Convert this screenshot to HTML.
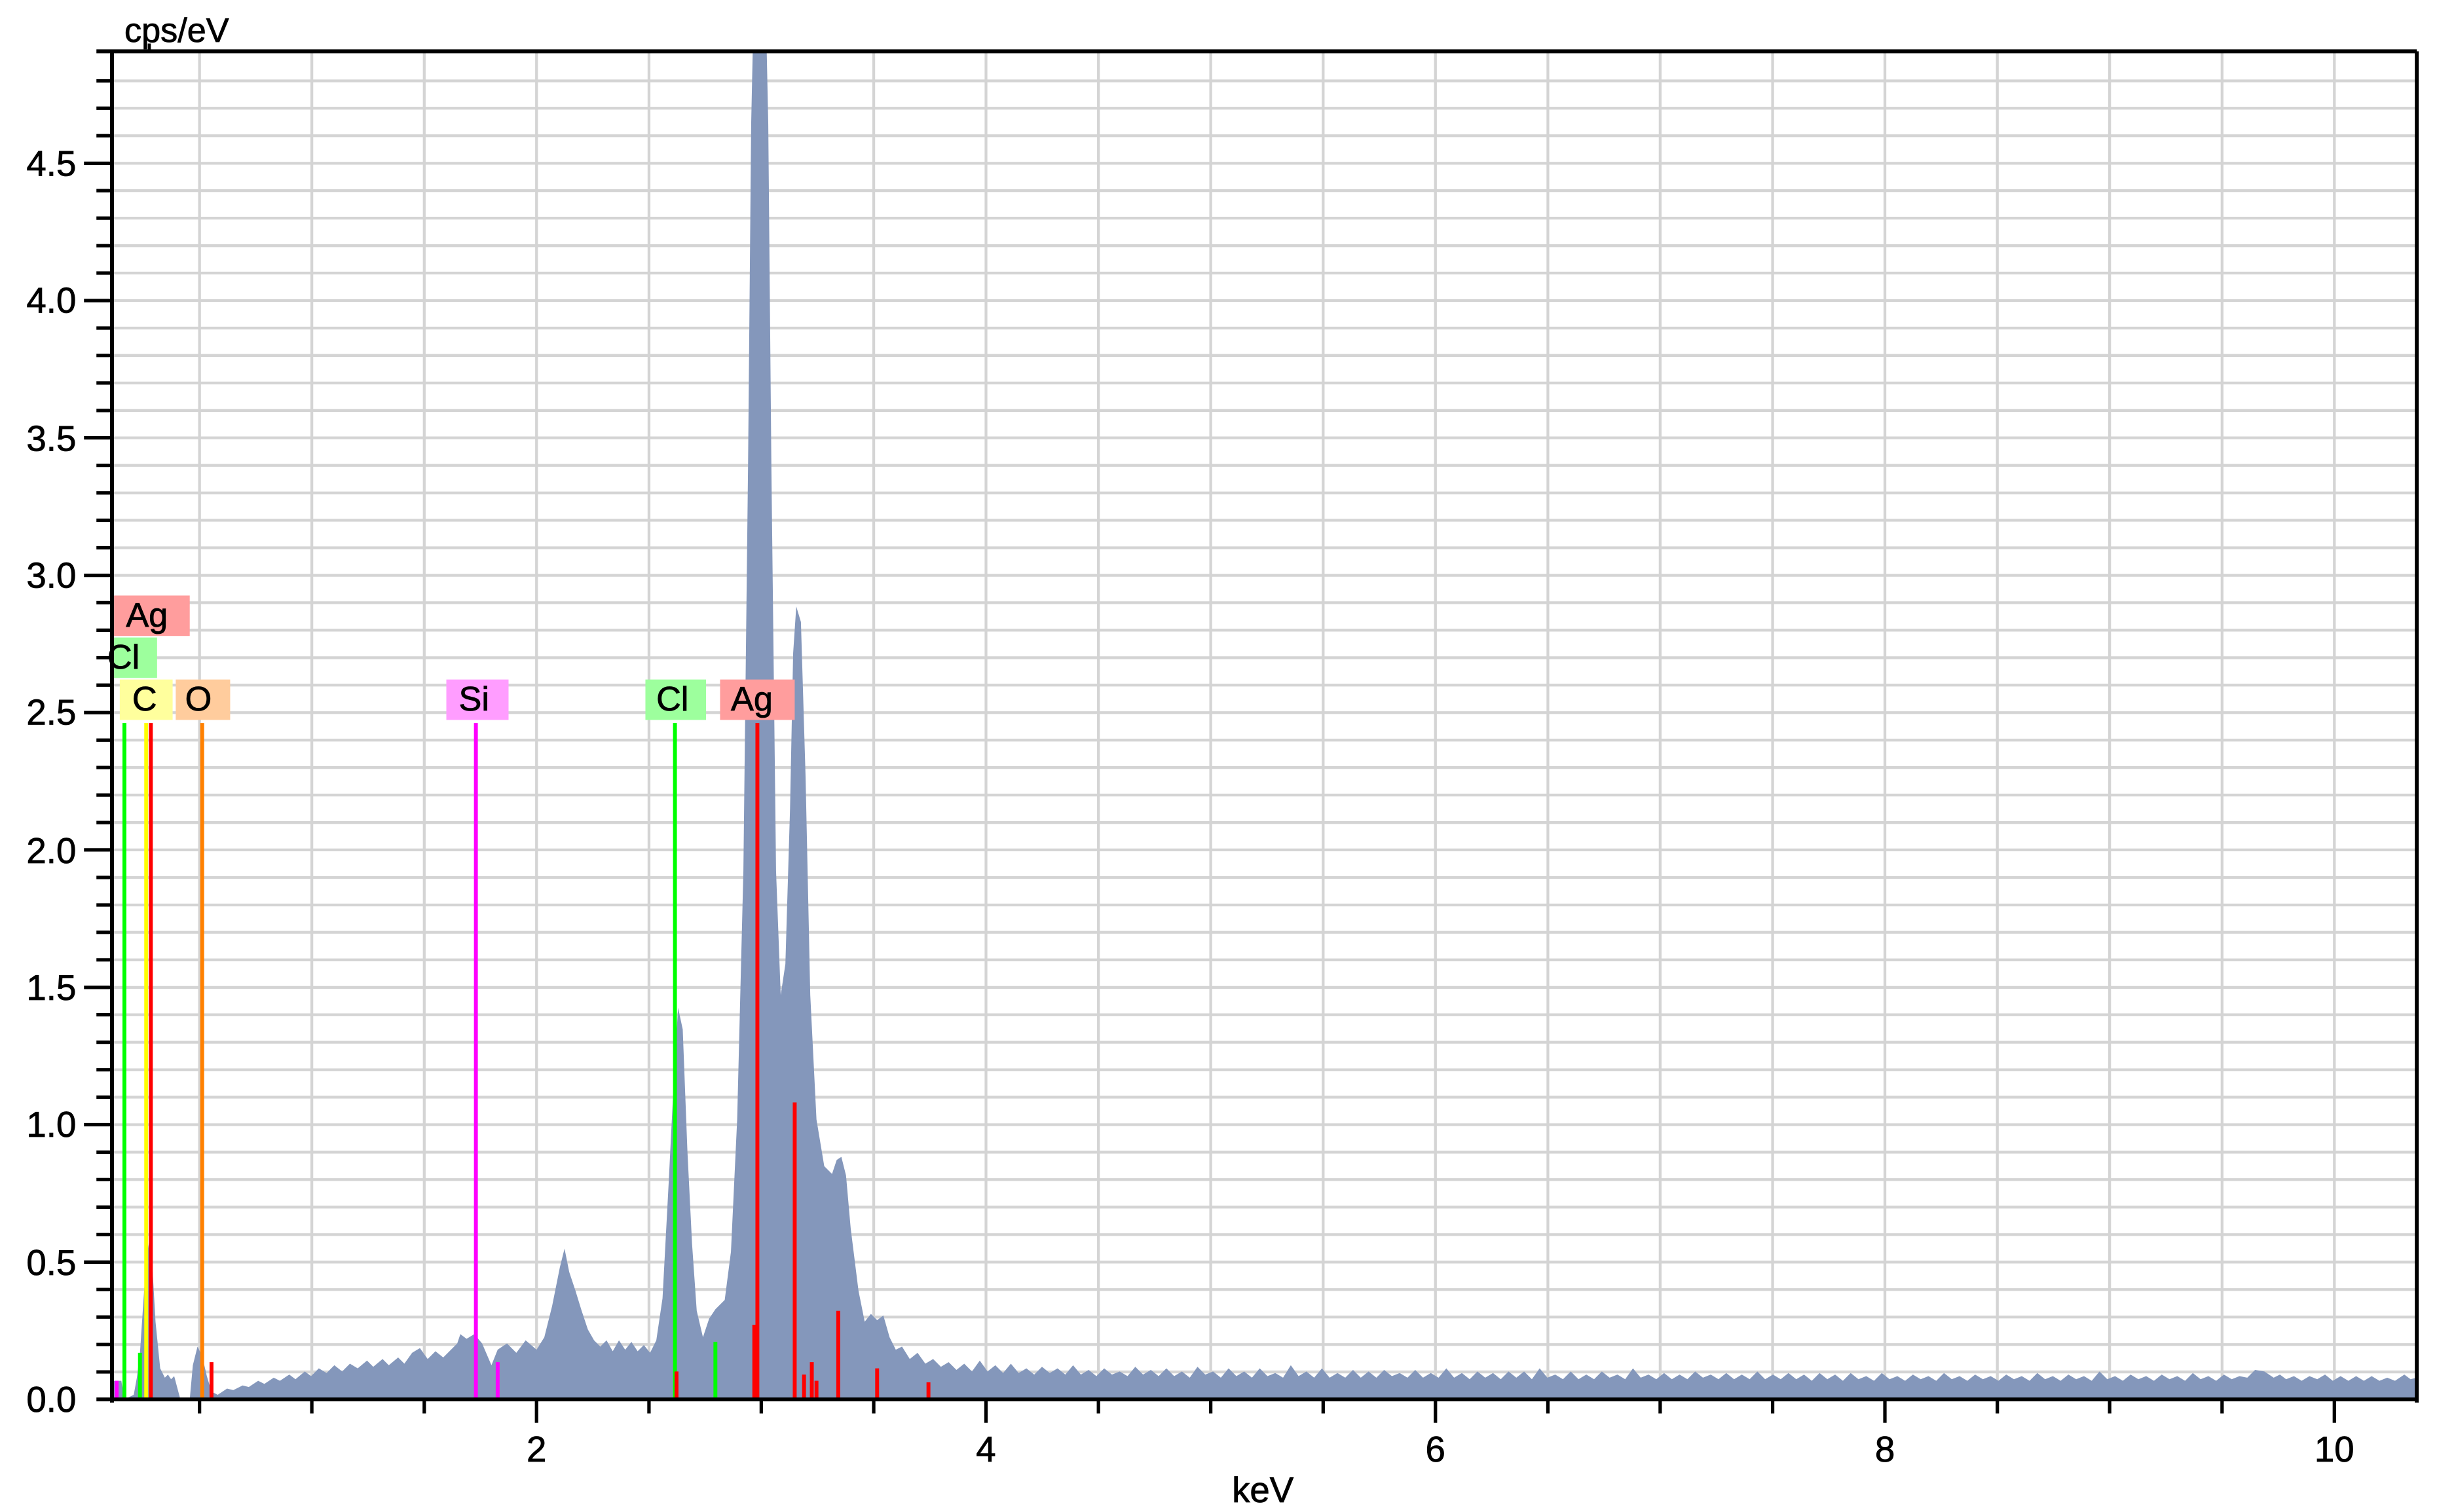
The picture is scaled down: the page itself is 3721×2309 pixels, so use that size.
<!DOCTYPE html>
<html><head><meta charset="utf-8"><style>
html,body{margin:0;padding:0;background:#fff;}
svg{display:block;}
text{font-family:"Liberation Sans",Arial,sans-serif;fill:#000;stroke:#000;stroke-width:0.35;}
</style></head><body>
<svg width="3721" height="2309" viewBox="0 0 1567 972.4" preserveAspectRatio="none" xmlns="http://www.w3.org/2000/svg">
<rect width="1567" height="972.4" fill="#fff"/>
<g stroke="#d4d4d4" stroke-width="1.8">
<line x1="72" y1="882.3" x2="1554" y2="882.3"/><line x1="72" y1="864.7" x2="1554" y2="864.7"/><line x1="72" y1="847" x2="1554" y2="847"/><line x1="72" y1="829.3" x2="1554" y2="829.3"/><line x1="72" y1="811.7" x2="1554" y2="811.7"/>
<line x1="72" y1="794" x2="1554" y2="794"/><line x1="72" y1="776.3" x2="1554" y2="776.3"/><line x1="72" y1="758.6" x2="1554" y2="758.6"/><line x1="72" y1="741" x2="1554" y2="741"/><line x1="72" y1="723.3" x2="1554" y2="723.3"/>
<line x1="72" y1="705.6" x2="1554" y2="705.6"/><line x1="72" y1="688" x2="1554" y2="688"/><line x1="72" y1="670.3" x2="1554" y2="670.3"/><line x1="72" y1="652.6" x2="1554" y2="652.6"/><line x1="72" y1="635" x2="1554" y2="635"/>
<line x1="72" y1="617.3" x2="1554" y2="617.3"/><line x1="72" y1="599.6" x2="1554" y2="599.6"/><line x1="72" y1="582" x2="1554" y2="582"/><line x1="72" y1="564.3" x2="1554" y2="564.3"/><line x1="72" y1="546.6" x2="1554" y2="546.6"/>
<line x1="72" y1="529" x2="1554" y2="529"/><line x1="72" y1="511.3" x2="1554" y2="511.3"/><line x1="72" y1="493.6" x2="1554" y2="493.6"/><line x1="72" y1="476" x2="1554" y2="476"/><line x1="72" y1="458.3" x2="1554" y2="458.3"/>
<line x1="72" y1="440.6" x2="1554" y2="440.6"/><line x1="72" y1="423" x2="1554" y2="423"/><line x1="72" y1="405.3" x2="1554" y2="405.3"/><line x1="72" y1="387.6" x2="1554" y2="387.6"/><line x1="72" y1="370" x2="1554" y2="370"/>
<line x1="72" y1="352.3" x2="1554" y2="352.3"/><line x1="72" y1="334.6" x2="1554" y2="334.6"/><line x1="72" y1="317" x2="1554" y2="317"/><line x1="72" y1="299.3" x2="1554" y2="299.3"/><line x1="72" y1="281.6" x2="1554" y2="281.6"/>
<line x1="72" y1="264" x2="1554" y2="264"/><line x1="72" y1="246.3" x2="1554" y2="246.3"/><line x1="72" y1="228.6" x2="1554" y2="228.6"/><line x1="72" y1="211" x2="1554" y2="211"/><line x1="72" y1="193.3" x2="1554" y2="193.3"/>
<line x1="72" y1="175.6" x2="1554" y2="175.6"/><line x1="72" y1="158" x2="1554" y2="158"/><line x1="72" y1="140.3" x2="1554" y2="140.3"/><line x1="72" y1="122.6" x2="1554" y2="122.6"/><line x1="72" y1="105" x2="1554" y2="105"/>
<line x1="72" y1="87.3" x2="1554" y2="87.3"/><line x1="72" y1="69.6" x2="1554" y2="69.6"/><line x1="72" y1="52" x2="1554" y2="52"/>
<line x1="128.3" y1="33" x2="128.3" y2="900"/><line x1="200.5" y1="33" x2="200.5" y2="900"/><line x1="272.8" y1="33" x2="272.8" y2="900"/><line x1="345" y1="33" x2="345" y2="900"/>
<line x1="417.3" y1="33" x2="417.3" y2="900"/><line x1="489.5" y1="33" x2="489.5" y2="900"/><line x1="561.8" y1="33" x2="561.8" y2="900"/><line x1="634" y1="33" x2="634" y2="900"/>
<line x1="706.3" y1="33" x2="706.3" y2="900"/><line x1="778.5" y1="33" x2="778.5" y2="900"/><line x1="850.8" y1="33" x2="850.8" y2="900"/><line x1="923" y1="33" x2="923" y2="900"/>
<line x1="995.3" y1="33" x2="995.3" y2="900"/><line x1="1067.5" y1="33" x2="1067.5" y2="900"/><line x1="1139.8" y1="33" x2="1139.8" y2="900"/><line x1="1212" y1="33" x2="1212" y2="900"/>
<line x1="1284.3" y1="33" x2="1284.3" y2="900"/><line x1="1356.5" y1="33" x2="1356.5" y2="900"/><line x1="1428.8" y1="33" x2="1428.8" y2="900"/><line x1="1501" y1="33" x2="1501" y2="900"/>
</g>
<path fill="#8497bb" d="M72,900 L72,888 L78,888 L80,900 L86,897 L88,886 L90,870 L92,840 L94,810 L96,798 L98,815 L100,850 L103,880 L106,886 L108,884 L110,887 L112,885 L116,900 L122,900 L124,878 L127,866 L130,872 L133,885 L136,895 L140,897 L146,893 L150,894 L156,891 L160,892 L166,888 L170,890 L176,886 L180,888 L186,884 L190,887 L196,882 L200,885 L205,880 L210,883 L215,878 L220,882 L225,877 L230,880 L236,875 L240,879 L246,874 L250,878 L256,873 L260,877 L265,870 L270,867 L275,874 L280,869 L285,873 L290,868 L294,864 L296,858 L300,861 L305,858 L310,864 L316,878 L320,868 L326,864 L332,870 L338,862 L345,868 L350,860 L355,840 L360,815 L363,803 L366,818 L370,830 L374,843 L378,855 L382,862 L386,866 L390,862 L394,869 L398,862 L402,868 L406,863 L410,869 L414,865 L418,870 L422,862 L426,835 L430,760 L433,700 L436,648 L439,662 L442,740 L445,800 L448,843 L452,860 L456,848 L460,842 L466,836 L470,805 L474,720 L478,560 L481,300 L483,80 L484,33 L493,33 L494,80 L496,300 L499,560 L502,640 L505,620 L508,520 L510,420 L512,390 L515,400 L518,500 L521,640 L525,720 L530,750 L535,755 L538,746 L541,744 L544,756 L547,790 L552,830 L556,850 L560,845 L564,849 L568,846 L572,860 L576,868 L580,866 L585,874 L590,870 L595,877 L600,874 L605,879 L610,876 L615,881 L620,877 L625,882 L630,875 L635,882 L640,878 L645,883 L650,877 L655,883 L660,880 L665,884 L670,879 L675,883 L680,880 L685,884 L690,878 L695,884 L700,881 L705,885 L710,880 L715,884 L720,882 L725,885 L730,879 L735,884 L740,881 L745,885 L750,880 L755,885 L760,882 L765,886 L770,879 L775,884 L780,882 L785,886 L790,880 L795,885 L800,882 L805,886 L810,880 L815,885 L820,883 L825,886 L830,878 L835,885 L840,882 L845,886 L850,880 L855,886 L860,883 L865,886 L870,881 L875,886 L880,882 L885,886 L890,881 L895,885 L900,883 L905,886 L910,881 L915,886 L920,883 L925,886 L930,880 L935,886 L940,883 L945,887 L950,882 L955,886 L960,883 L965,887 L970,882 L975,886 L980,882 L985,887 L990,880 L995,886 L1000,884 L1005,887 L1010,882 L1015,887 L1020,884 L1025,887 L1030,882 L1035,886 L1040,884 L1045,887 L1050,880 L1055,886 L1060,884 L1065,887 L1070,883 L1075,887 L1080,884 L1085,887 L1090,882 L1095,886 L1100,884 L1105,887 L1110,883 L1115,887 L1120,884 L1125,887 L1130,882 L1135,887 L1140,884 L1145,887 L1150,883 L1155,887 L1160,884 L1165,888 L1170,883 L1175,887 L1180,884 L1185,888 L1190,883 L1195,887 L1200,885 L1205,888 L1210,883 L1215,887 L1220,885 L1225,888 L1230,884 L1235,887 L1240,885 L1245,888 L1250,883 L1255,887 L1260,885 L1265,888 L1270,884 L1275,887 L1280,885 L1285,888 L1290,884 L1295,887 L1300,885 L1305,888 L1310,883 L1315,887 L1320,885 L1325,888 L1330,884 L1335,887 L1340,885 L1345,888 L1350,882 L1355,887 L1360,885 L1365,888 L1370,884 L1375,887 L1380,885 L1385,888 L1390,884 L1395,887 L1400,885 L1405,888 L1410,883 L1415,887 L1420,885 L1425,888 L1430,884 L1435,887 L1440,885 L1445,886 L1450,881 L1456,882 L1462,886 L1466,884 L1470,887 L1475,885 L1480,888 L1485,885 L1490,887 L1495,884 L1500,888 L1505,885 L1510,888 L1515,885 L1520,888 L1525,885 L1530,888 L1535,886 L1540,888 L1546,884 L1550,887 L1554,886 L1554,900 Z"/>
<g stroke-width="2.5">
<line x1="80" y1="465" x2="80" y2="900" stroke="#00ff00"/>
<line x1="94" y1="465" x2="94" y2="900" stroke="#ffff00"/>
<line x1="97" y1="465" x2="97" y2="900" stroke="#ff0000"/>
<line x1="130" y1="465" x2="130" y2="900" stroke="#ff8000"/>
<line x1="306" y1="465" x2="306" y2="900" stroke="#ff00ff"/>
<line x1="434" y1="465" x2="434" y2="900" stroke="#00ff00"/>
<line x1="487" y1="465" x2="487" y2="900" stroke="#ff0000"/>
<line x1="75" y1="888" x2="75" y2="900" stroke="#ff00ff"/>
<line x1="90" y1="870" x2="90" y2="900" stroke="#00ff00"/>
<line x1="136" y1="876" x2="136" y2="900" stroke="#ff0000"/>
<line x1="320" y1="876" x2="320" y2="900" stroke="#ff00ff"/>
<line x1="435" y1="882" x2="435" y2="900" stroke="#ff0000"/>
<line x1="460" y1="863" x2="460" y2="900" stroke="#00ff00"/>
<line x1="485" y1="852" x2="485" y2="900" stroke="#ff0000"/>
<line x1="511" y1="709" x2="511" y2="900" stroke="#ff0000"/>
<line x1="517" y1="884" x2="517" y2="900" stroke="#ff0000"/>
<line x1="522" y1="876" x2="522" y2="900" stroke="#ff0000"/>
<line x1="525" y1="888" x2="525" y2="900" stroke="#ff0000"/>
<line x1="539" y1="843" x2="539" y2="900" stroke="#ff0000"/>
<line x1="564" y1="880" x2="564" y2="900" stroke="#ff0000"/>
<line x1="597" y1="889" x2="597" y2="900" stroke="#ff0000"/>
</g>
<g font-size="22">
<rect x="73" y="383" width="49" height="26" fill="#ff9d9d"/><text x="81" y="403">Ag</text>
<rect x="72" y="410" width="29" height="26" fill="#9dff9d"/><text x="69" y="430">Cl</text>
<rect x="77" y="437" width="34" height="26" fill="#ffff9d"/><text x="85" y="457">C</text>
<rect x="113" y="437" width="35" height="26" fill="#ffcc9d"/><text x="119" y="457">O</text>
<rect x="287" y="437" width="40" height="26" fill="#ff9dff"/><text x="295" y="457">Si</text>
<rect x="415" y="437" width="39" height="26" fill="#9dff9d"/><text x="422" y="457">Cl</text>
<rect x="463" y="437" width="48" height="26" fill="#ff9d9d"/><text x="470" y="457">Ag</text>
</g>
<g stroke="#000" stroke-width="2.5" fill="none">
<line x1="72" y1="33" x2="72" y2="902"/>
<line x1="1554" y1="33" x2="1554" y2="902"/>
<line x1="62" y1="33" x2="1554" y2="33"/>
<line x1="62" y1="900" x2="1555" y2="900"/>
<line x1="96" y1="33" x2="96" y2="28" stroke-width="2"/>
</g>
<g stroke="#000" stroke-width="2.2">
<path d="M62,882.3H72M62,864.7H72M62,847H72M62,829.3H72M62,794H72M62,776.3H72M62,758.6H72M62,741H72M62,705.6H72M62,688H72M62,670.3H72M62,652.6H72M62,617.3H72M62,599.6H72M62,582H72M62,564.3H72M62,529H72M62,511.3H72M62,493.6H72M62,476H72M62,440.6H72M62,423H72M62,405.3H72M62,387.6H72M62,352.3H72M62,334.6H72M62,317H72M62,299.3H72M62,264H72M62,246.3H72M62,228.6H72M62,211H72M62,175.6H72M62,158H72M62,140.3H72M62,122.6H72M62,87.3H72M62,69.6H72M62,52H72"/>
<path d="M54,811.7H72M54,723.3H72M54,635H72M54,546.6H72M54,458.3H72M54,370H72M54,281.6H72M54,193.3H72M54,105H72"/>
<path d="M128.3,900V909M200.5,900V909M272.8,900V909M417.3,900V909M489.5,900V909M561.8,900V909M706.3,900V909M778.5,900V909M850.8,900V909M995.3,900V909M1067.5,900V909M1139.8,900V909M1284.3,900V909M1356.5,900V909M1428.8,900V909"/>
<path d="M345,900V915M634,900V915M923,900V915M1212,900V915M1501,900V915"/>
</g>
<g font-size="23" text-anchor="end">
<text x="49" y="908">0.0</text><text x="49" y="820">0.5</text><text x="49" y="731">1.0</text><text x="49" y="643">1.5</text><text x="49" y="555">2.0</text>
<text x="49" y="466">2.5</text><text x="49" y="378">3.0</text><text x="49" y="290">3.5</text><text x="49" y="201">4.0</text><text x="49" y="113">4.5</text>
</g>
<g font-size="23" text-anchor="middle">
<text x="345" y="940">2</text><text x="634" y="940">4</text><text x="923" y="940">6</text><text x="1212" y="940">8</text><text x="1501" y="940">10</text>
<text x="812" y="966">keV</text>
</g>
<text x="80" y="27" font-size="22">cps/eV</text>
</svg>
</body></html>
